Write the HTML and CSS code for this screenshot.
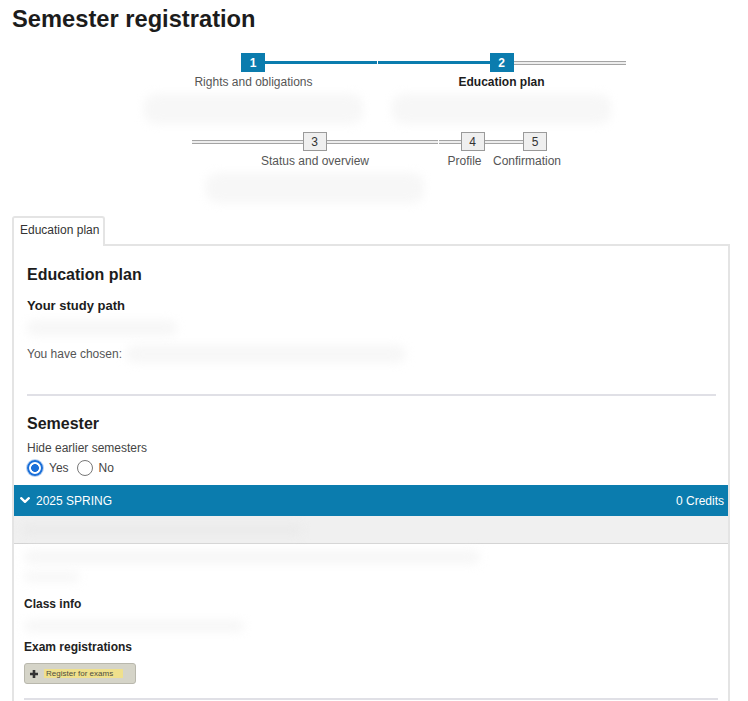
FILE: index.html
```html
<!DOCTYPE html>
<html lang="en">
<head>
<meta charset="utf-8">
<title>Semester registration</title>
<link rel="stylesheet" href="styles.css">
</head>
<body>
<div class="page">
  <h1 class="title">Semester registration</h1>

  <div class="stepper">
    <div class="step step-w248">
      <div class="step-head"><span class="line line-none"></span><span class="box box-active">1</span><span class="line line-blue line-join"></span></div>
      <div class="step-label">Rights and obligations</div>
      <div class="step-desc"><span class="blur"></span></div>
    </div>
    <div class="step step-w248">
      <div class="step-head"><span class="line line-blue"></span><span class="box box-active">2</span><span class="line line-grey"></span></div>
      <div class="step-label step-label-current">Education plan</div>
      <div class="step-desc"><span class="blur"></span></div>
    </div>
    <div class="step step-w247">
      <div class="step-head"><span class="line line-grey"></span><span class="box box-todo">3</span><span class="line line-grey line-join"></span></div>
      <div class="step-label">Status and overview</div>
      <div class="step-desc"><span class="blur"></span></div>
    </div>
    <div class="step step-w68">
      <div class="step-head"><span class="line line-grey"></span><span class="box box-todo">4</span><span class="line line-grey"></span></div>
      <div class="step-label step-label-shift">Profile</div>
    </div>
    <div class="step step-w57">
      <div class="step-head"><span class="line line-grey"></span><span class="box box-todo">5</span><span class="line line-none"></span></div>
      <div class="step-label step-label-shift">Confirmation</div>
    </div>
  </div>

  <div class="tabs">
    <div class="tab">Education plan</div>
    <div class="tab-fill"></div>
  </div>

  <div class="panel">
    <div class="panel-body">
      <h2 class="sec-title">Education plan</h2>
      <h3 class="sub-title">Your study path</h3>
      <div class="blur blur-path"></div>
      <p class="chosen">You have chosen:<span class="blur blur-chosen"></span></p>
      <hr class="divider">
      <h2 class="sec-title sec-title-gap">Semester</h2>
      <div class="hide-label">Hide earlier semesters</div>
      <div class="radios">
        <input class="radio" type="radio" name="hide" id="hide-yes" checked>
        <label class="radio-label" for="hide-yes">Yes</label>
        <input class="radio" type="radio" name="hide" id="hide-no">
        <label class="radio-label" for="hide-no">No</label>
      </div>
    </div>

    <div class="sem-bar">
      <div class="sem-name">
        <svg class="chevron" width="10" height="7" viewBox="0 0 10 7"><polyline points="1.2,1.2 5,4.8 8.8,1.2" fill="none" stroke="#fff" stroke-width="2.3" stroke-linecap="round" stroke-linejoin="round"/></svg>
        <span>2025 SPRING</span>
      </div>
      <span class="credits">0 Credits</span>
    </div>
    <div class="sem-sub"><span class="blur blur-sub"></span></div>

    <div class="sem-body">
      <div class="blur blur-line1"></div>
      <div class="blur blur-line2"></div>
      <h4 class="minor-title">Class info</h4>
      <div class="blur blur-line3"></div>
      <h4 class="minor-title minor-title-tight">Exam registrations</h4>
      <button class="exam-btn" type="button">
        <svg class="plus" width="8" height="8" viewBox="0 0 8 8"><path d="M4 0V8M0 4H8" stroke="#333" stroke-width="2.6"/></svg>
        <span class="exam-text">Register for exams</span>
      </button>
      <hr class="divider divider-bottom">
    </div>
  </div>
</div>
</body>
</html>
```

FILE: styles.css
```css
* { box-sizing: border-box; }

html { overflow: hidden; }

body {
  margin: 0;
  font-family: "Liberation Sans", Arial, sans-serif;
  color: #333;
  background: #fff;
}

.page {
  padding: 0 18px 0 12px;
}

.title {
  margin: 5px 0 0;
  font-size: 23.7px;
  line-height: 28px;
  font-weight: bold;
  color: #1c1c1c;
}

/* ---------- stepper ---------- */
.stepper {
  display: flex;
  flex-wrap: wrap;
  justify-content: center;
  width: 731px;
  margin: 20px 0 5px;
}

.step {
  display: flex;
  flex-direction: column;
  height: 79px;
}
.step-w248 { width: 248px; }
.step-w247 { width: 247px; }
.step-w68 { width: 68px; }
.step-w57 { width: 57px; }

.step-head {
  display: flex;
  align-items: center;
  height: 19px;
}

.line {
  flex: 1;
  height: 4px;
}
.line-blue {
  height: 3px;
  background: #0b7cae;
}
.line-grey {
  border-top: 1px solid #a4a4a4;
  border-bottom: 1px solid #a4a4a4;
  background: #ededed;
}
.line-join { margin-right: 1px; }

.box {
  width: 24px;
  height: 19px;
  display: flex;
  align-items: center;
  justify-content: center;
  font-size: 12px;
  flex: none;
}
.box-active {
  background: #0b7cae;
  color: #fff;
  font-weight: bold;
}
.box-todo {
  background: #efefef;
  border: 1px solid #999;
  color: #333;
}

.step-label {
  display: flex;
  justify-content: center;
  margin-top: 2px;
  font-size: 12px;
  line-height: 16px;
  color: #555;
  white-space: nowrap;
}
.step-label-current {
  color: #1c1c1c;
  font-weight: bold;
}
.step-label-shift { padding-right: 16px; }

.step-desc {
  display: flex;
  justify-content: center;
  margin-top: 4px;
  height: 30px;
}
.step-desc .blur { width: 88%; }

.blur {
  display: block;
  background: #f7f7f7;
  filter: blur(5px);
  border-radius: 12px;
}

/* ---------- tabs & panel ---------- */
.tabs {
  display: flex;
}
.tab {
  padding: 4px 4px 8px 6px;
  font-size: 12px;
  line-height: 16px;
  color: #333;
  background: #fff;
  border: 2px solid #e4e4e4;
  border-bottom: none;
  border-radius: 3px 3px 0 0;
}
.tab-fill {
  flex: 1;
  border-bottom: 2px solid #e4e4e4;
}

.panel {
  border: 2px solid #e4e4e4;
  border-top: none;
}

.panel-body {
  padding: 19px 12px 8px 13px;
}

.sec-title {
  margin: 0;
  font-size: 16px;
  line-height: 20px;
  font-weight: bold;
  color: #1c1c1c;
}
.sec-title-gap { margin-top: 18px; }

.sub-title {
  margin: 13px 0 0;
  font-size: 13px;
  line-height: 16px;
  font-weight: bold;
  color: #1c1c1c;
}

.blur-path {
  width: 150px;
  height: 16px;
  margin-top: 6px;
}

.chosen {
  display: flex;
  align-items: center;
  margin: 9px 0 0;
  font-size: 12px;
  line-height: 16px;
  color: #555;
}
.blur-chosen {
  width: 280px;
  height: 18px;
  margin-left: 4px;
}

.divider {
  height: 0;
  margin: 31px 0 0;
  border: 0;
  border-top: 2px solid #e0e0e6;
}

.hide-label {
  margin-top: 6px;
  font-size: 12px;
  line-height: 16px;
  color: #444;
}

.radios {
  display: flex;
  align-items: center;
  height: 18px;
  margin-top: 3px;
}
.radio {
  -webkit-appearance: none;
  appearance: none;
  width: 16px;
  height: 16px;
  margin: 0;
  border: 1px solid #777;
  border-radius: 50%;
  background: #fff;
}
.radio:checked {
  border: 2px solid #1b6fd8;
  background: radial-gradient(circle, #1b6fd8 0 3.6px, #fff 4.2px);
  box-shadow: 0 0 0 1px #b9d2f2;
}
.radio-label {
  margin: 0 8px 0 6px;
  font-size: 12px;
  line-height: 16px;
  color: #444;
}

.sem-bar {
  display: flex;
  align-items: center;
  justify-content: space-between;
  height: 31px;
  padding: 0 4px 0 6px;
  background: #0b7cae;
  color: #fff;
  font-size: 12px;
}
.sem-name {
  display: flex;
  align-items: center;
  gap: 6px;
}

.sem-sub {
  display: flex;
  align-items: center;
  height: 28px;
  padding: 0 8px;
  background: #f0f0f0;
  border-bottom: 1px solid #d4d4d4;
}
.blur-sub {
  width: 280px;
  height: 10px;
  background: #eaeaea;
}

.sem-body {
  padding: 6px 10px 1px;
}
.blur-line1 {
  width: 456px;
  height: 14px;
}
.blur-line2 {
  width: 56px;
  height: 10px;
  margin-top: 8px;
}
.blur-line3 {
  width: 220px;
  height: 12px;
  margin-top: 8px;
}

.minor-title {
  margin: 14px 0 0;
  font-size: 12px;
  line-height: 16px;
  font-weight: bold;
  color: #222;
}
.minor-title-tight { margin-top: 7px; }

.exam-btn {
  display: flex;
  align-items: center;
  gap: 6px;
  height: 21px;
  margin-top: 8px;
  padding: 0 12px 0 5px;
  background: #d5d4c8;
  border: 1px solid #b9b8ad;
  border-radius: 3px;
  font-family: inherit;
}
.exam-text {
  padding: 0 10px 0 2px;
  font-size: 8px;
  line-height: 9px;
  color: #4d4d40;
  background: #efe08c;
}

.divider-bottom {
  margin-top: 14px;
}
```
